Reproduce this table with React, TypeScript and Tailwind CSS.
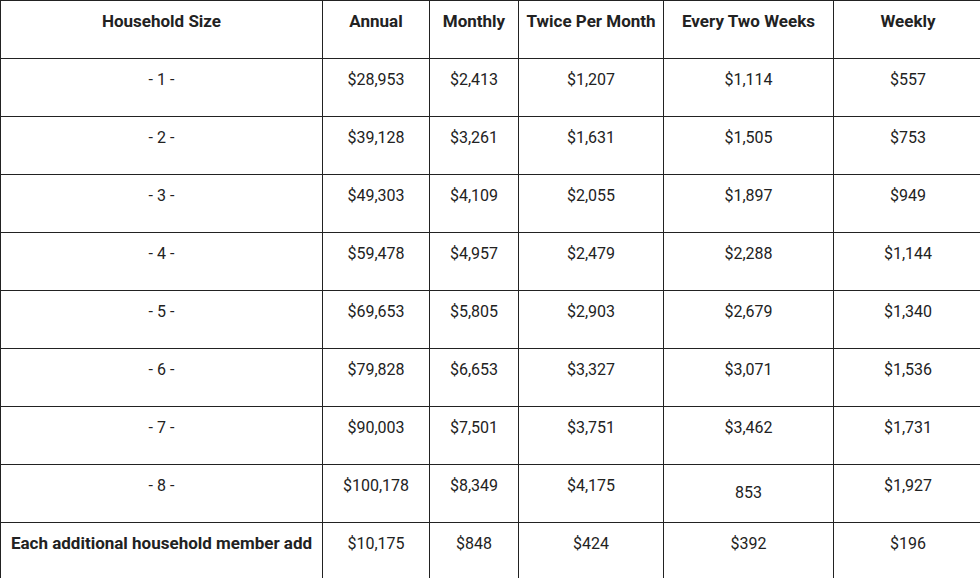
import React from "react";

const rows: string[][] = [
  ["- 1 -", "$28,953", "$2,413", "$1,207", "$1,114", "$557"],
  ["- 2 -", "$39,128", "$3,261", "$1,631", "$1,505", "$753"],
  ["- 3 -", "$49,303", "$4,109", "$2,055", "$1,897", "$949"],
  ["- 4 -", "$59,478", "$4,957", "$2,479", "$2,288", "$1,144"],
  ["- 5 -", "$69,653", "$5,805", "$2,903", "$2,679", "$1,340"],
  ["- 6 -", "$79,828", "$6,653", "$3,327", "$3,071", "$1,536"],
  ["- 7 -", "$90,003", "$7,501", "$3,751", "$3,462", "$1,731"],
  ["- 8 -", "$100,178", "$8,349", "$4,175", "853", "$1,927"],
];

const headers = ["Household Size", "Annual", "Monthly", "Twice Per Month", "Every Two Weeks", "Weekly"];
const widths = ["w-[322px]", "w-[107px]", "w-[89px]", "w-[145px]", "w-[170px]", "w-[149px]"];

export default function App() {
  return (
    <div className="w-[980px] h-[578px] overflow-hidden bg-white text-[#222222] font-['Roboto',sans-serif]">
      <table className="border-collapse w-[982px] table-fixed text-[16px] leading-[21px]">
        <colgroup>
          {widths.map((w, i) => (
            <col key={i} className={w} />
          ))}
        </colgroup>
        <thead>
          <tr>
            {headers.map((h) => (
              <th
                key={h}
                className="border border-[#222222] h-[58px] align-top p-0 pt-[10px] text-center text-[17px] font-bold"
              >
                {h}
              </th>
            ))}
          </tr>
        </thead>
        <tbody>
          {rows.map((r, ri) => (
            <tr key={ri}>
              {r.map((c, ci) => (
                <td
                  key={ci}
                  className={
                    "border border-[#222222] h-[58px] align-top p-0 text-center " +
                    (c === "853" ? "pt-[17px]" : "pt-[10px]")
                  }
                >
                  {c}
                </td>
              ))}
            </tr>
          ))}
          <tr>
            <td className="border border-[#222222] h-[58px] align-top p-0 pt-[10px] text-center text-[17px] font-bold">
              Each additional household member add
            </td>
            {["$10,175", "$848", "$424", "$392", "$196"].map((c, i) => (
              <td key={i} className="border border-[#222222] h-[58px] align-top p-0 pt-[10px] text-center">
                {c}
              </td>
            ))}
          </tr>
        </tbody>
      </table>
    </div>
  );
}
